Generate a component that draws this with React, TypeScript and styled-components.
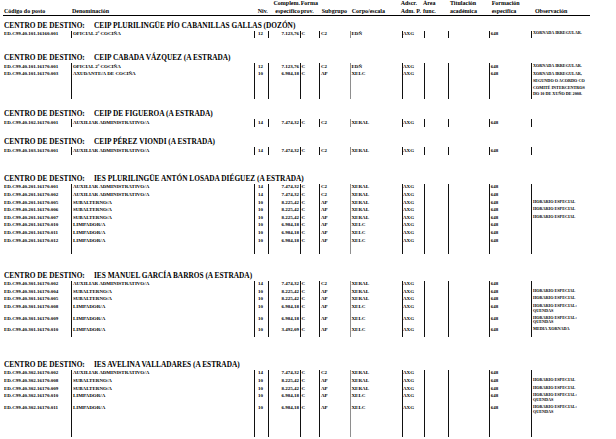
import React from "react";
import styled, { createGlobalStyle } from "styled-components";

// column tracks, shared by the header and every row
const COLS =
  "68.3px 182.7px 14.5px 31.5px 19px 31px 51.7px 22.3px 23.7px 41.6px 41.7px 80px";

const GlobalStyle = createGlobalStyle`
  html, body {
    margin: 0;
    padding: 0;
    background: #fff;
  }
`;

const Sheet = styled.div`
  width: 616px;
  height: 439px;
  overflow: hidden;
  box-sizing: border-box;
  padding-left: 3px;
  font-family: "Liberation Serif", "Times New Roman", serif;
  font-weight: bold;
  color: #000;
`;

const Head = styled.div`
  display: grid;
  grid-template-columns: ${COLS};
  align-items: end;
  width: 587px;
  height: 15px;
  border-bottom: 1px solid #000;
  font-size: 6px;
  line-height: 7.5px;
`;

const HeadCell = styled.div<{ $dx?: number; $right?: boolean }>`
  margin-left: ${(p) => p.$dx ?? 0}px;
  text-align: ${(p) => (p.$right ? "right" : "left")};
  white-space: nowrap;
`;

const Centre = styled.section<{ $mt: number }>`
  margin-top: ${(p) => p.$mt}px;
`;

const Heading = styled.h2`
  margin: 0 0 1px;
  padding-left: 1px;
  height: 8px;
  font-size: 7.35px;
  line-height: 8px;
  font-weight: bold;
  white-space: nowrap;
`;

const HeadingLabel = styled.span`
  display: inline-block;
  width: 90px;
`;

const Row = styled.div<{ $h?: number }>`
  display: grid;
  grid-template-columns: ${COLS};
  min-height: ${(p) => p.$h ?? 7.65}px;
  font-size: 5px;
  line-height: 5px;
`;

type Bar = "none" | "dark" | "soft";

const Cell = styled.div<{ $bar?: Bar; $pl?: number; $right?: boolean }>`
  box-sizing: border-box;
  border-left: ${(p) =>
    p.$bar === "none"
      ? "0"
      : p.$bar === "soft"
      ? "1.5px solid #8e8e8e"
      : "1px solid #111"};
  padding: 0.5px ${(p) => (p.$right ? 1 : 0)}px 1.4px ${(p) => p.$pl ?? 0}px;
  text-align: ${(p) => (p.$right ? "right" : "left")};
  white-space: nowrap;
`;

const ObsCell = styled(Cell)<{ $lh?: number }>`
  font-size: 4.2px;
  line-height: ${(p) => p.$lh ?? 4.8}px;
`;

type Post = {
  code: string;
  name: string;
  niv: string;
  comp: string;
  sub: string;
  corpo: string;
  obs?: string[];
  h?: number;
  lh?: number;
};

type Dest = { title: string; mt: number; posts: Post[] };

const P = "ED.C99.40.";

const aux = (code: string, extra: Partial<Post> = {}): Post => ({
  code: P + code,
  name: "AUXILIAR ADMINISTRATIVO/A",
  niv: "14",
  comp: "7.474,32",
  sub: "C2",
  corpo: "XERAL",
  ...extra,
});

const subalt = (code: string, extra: Partial<Post> = {}): Post => ({
  code: P + code,
  name: "SUBALTERNO/A",
  niv: "10",
  comp: "8.225,42",
  sub: "AP",
  corpo: "XERAL",
  obs: ["HORARIO ESPECIAL"],
  ...extra,
});

const limp = (code: string, extra: Partial<Post> = {}): Post => ({
  code: P + code,
  name: "LIMPADOR/A",
  niv: "10",
  comp: "6.984,18",
  sub: "AP",
  corpo: "XELC",
  ...extra,
});

const quendas = ["HORARIO ESPECIAL:", "QUENDAS"];

const DESTS: Dest[] = [
  {
    title: "CEIP PLURILINGÜE PÍO CABANILLAS GALLAS (DOZÓN)",
    mt: 5.5,
    posts: [
      {
        code: P + "101.16160.001",
        name: "OFICIAL 2ª COCIÑA",
        niv: "12",
        comp: "7.123,76",
        sub: "C2",
        corpo: "EDÑ",
        obs: ["XORNADA IRREGULAR."],
      },
    ],
  },
  {
    title: "CEIP CABADA VÁZQUEZ (A ESTRADA)",
    mt: 16.1,
    posts: [
      {
        code: P + "101.16170.001",
        name: "OFICIAL 2ª COCIÑA",
        niv: "12",
        comp: "7.123,76",
        sub: "C2",
        corpo: "EDÑ",
        obs: ["XORNADA IRREGULAR."],
      },
      {
        code: P + "101.16170.003",
        name: "AXUDANTE/A DE COCIÑA",
        niv: "10",
        comp: "6.984,18",
        sub: "AP",
        corpo: "XELC",
        obs: [
          "XORNADA IRREGULAR,",
          "SEGUNDO O ACORDO CO",
          "COMITÉ INTERCENTROS",
          "DO 10 DE XUÑO DE 2008.",
        ],
        lh: 6.6,
        h: 27,
      },
    ],
  },
  {
    title: "CEIP DE FIGUEROA (A ESTRADA)",
    mt: 11,
    posts: [aux("102.16170.001")],
  },
  {
    title: "CEIP PÉREZ VIONDI (A ESTRADA)",
    mt: 11.35,
    posts: [aux("103.16170.001")],
  },
  {
    title: "IES PLURILINGÜE ANTÓN LOSADA DIÉGUEZ (A ESTRADA)",
    mt: 20,
    posts: [
      aux("201.16170.001"),
      aux("201.16170.002"),
      subalt("201.16170.005"),
      subalt("201.16170.006"),
      subalt("201.16170.007"),
      limp("201.16170.010"),
      limp("201.16170.011"),
      limp("201.16170.012", { h: 16.75 }),
    ],
  },
  {
    title: "IES MANUEL GARCÍA BARROS (A ESTRADA)",
    mt: 17.7,
    posts: [
      aux("301.16170.002"),
      subalt("301.16170.004"),
      subalt("301.16170.005"),
      limp("301.16170.008", { obs: quendas }),
      limp("301.16170.009", { obs: quendas }),
      limp("301.16170.010", {
        comp: "3.492,09",
        obs: ["MEDIA XORNADA"],
        h: 10.7,
      }),
    ],
  },
  {
    title: "IES AVELINA VALLADARES (A ESTRADA)",
    mt: 23.7,
    posts: [
      aux("302.16170.002"),
      subalt("302.16170.008"),
      subalt("302.16170.009"),
      limp("302.16170.010", { obs: quendas }),
      limp("302.16170.011", { obs: quendas, h: 33 }),
    ],
  },
];

const PostRow = ({ post }: { post: Post }) => (
  <Row $h={post.h}>
    <Cell $bar="none" $pl={1}>
      {post.code}
    </Cell>
    <Cell $pl={0.6}>{post.name}</Cell>
    <Cell $pl={3}>{post.niv}</Cell>
    <Cell $right>{post.comp}</Cell>
    <Cell $pl={0.5}>C</Cell>
    <Cell $pl={1}>{post.sub}</Cell>
    <Cell $bar="soft" $pl={0.5}>
      {post.corpo}
    </Cell>
    <Cell $pl={0.3}>AXG</Cell>
    <Cell />
    <Cell />
    <Cell $pl={0.5}>648</Cell>
    <ObsCell $pl={1} $lh={post.lh}>
      {(post.obs ?? []).map((line, i) => (
        <React.Fragment key={i}>
          {i > 0 && <br />}
          {line}
        </React.Fragment>
      ))}
    </ObsCell>
  </Row>
);

const App = () => {
  return (
    <>
      <GlobalStyle />
      <Sheet>
        <Head>
          <HeadCell $dx={1}>Código do posto</HeadCell>
          <HeadCell $dx={0.7}>Denominación</HeadCell>
          <HeadCell $dx={3.7}>Niv.</HeadCell>
          <HeadCell $right>
            Complem.
            <br />
            específico
          </HeadCell>
          <HeadCell $dx={0.7}>
            Forma
            <br />
            prov.
          </HeadCell>
          <HeadCell $dx={2.7}>Subgrupo</HeadCell>
          <HeadCell $dx={1.7}>Corpo/escala</HeadCell>
          <HeadCell $dx={-1}>
            Adscr.
            <br />
            Adm. P.
          </HeadCell>
          <HeadCell $dx={-1}>
            Área
            <br />
            func.
          </HeadCell>
          <HeadCell $dx={2.3}>
            Titulación
            <br />
            académica
          </HeadCell>
          <HeadCell $dx={2.4}>
            Formación
            <br />
            específica
          </HeadCell>
          <HeadCell $dx={4}>Observación</HeadCell>
        </Head>

        {DESTS.map((d) => (
          <Centre key={d.title} $mt={d.mt}>
            <Heading>
              <HeadingLabel>CENTRO DE DESTINO:</HeadingLabel>
              {d.title}
            </Heading>
            {d.posts.map((p) => (
              <PostRow key={p.code} post={p} />
            ))}
          </Centre>
        ))}
      </Sheet>
    </>
  );
};

export default App;
